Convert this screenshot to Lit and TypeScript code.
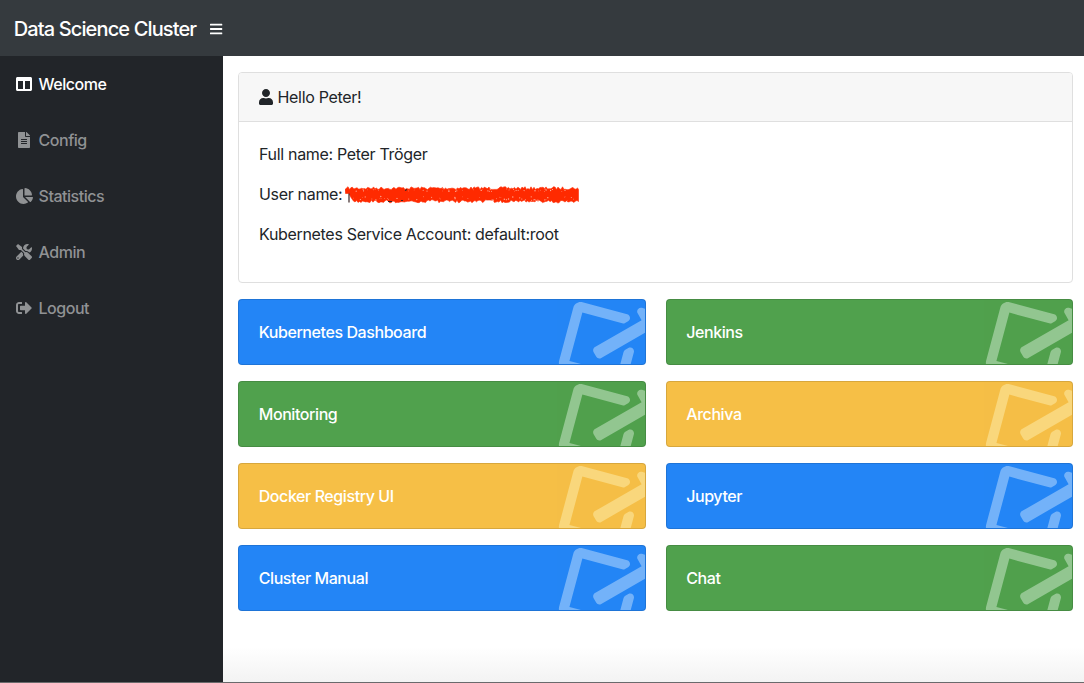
import { LitElement, html, svg, css } from "lit";
import { customElement, property } from "lit/decorators.js";

type Icon = { w: number; d: string };

const icons: Record<string, Icon> = {
  bars: { w: 448, d: "M16 132h416c8.800 0 16-7.200 16-16V76c0-8.800-7.200-16-16-16H16C7.200 60 0 67.200 0 76v40c0 8.800 7.200 16 16 16zm0 160h416c8.800 0 16-7.200 16-16v-40c0-8.800-7.200-16-16-16H16c-8.800 0-16 7.200-16 16v40c0 8.800 7.200 16 16 16zm0 160h416c8.800 0 16-7.200 16-16v-40c0-8.800-7.200-16-16-16H16c-8.800 0-16 7.200-16 16v40c0 8.800 7.200 16 16 16z" },
  columns: { w: 512, d: "M464 32H48C21.490 32 0 53.490 0 80v352c0 26.510 21.490 48 48 48h416c26.510 0 48-21.490 48-48V80c0-26.510-21.490-48-48-48zM224 416H64V160h160v256zm224 0H288V160h160v256z" },
  file: { w: 384, d: "M224 136V0H24C10.700 0 0 10.700 0 24v464c0 13.300 10.700 24 24 24h336c13.300 0 24-10.700 24-24V160H248c-13.200 0-24-10.800-24-24zm64 236c0 6.600-5.400 12-12 12H108c-6.600 0-12-5.400-12-12v-8c0-6.600 5.400-12 12-12h168c6.600 0 12 5.400 12 12v8zm0-64c0 6.600-5.400 12-12 12H108c-6.600 0-12-5.400-12-12v-8c0-6.600 5.400-12 12-12h168c6.600 0 12 5.400 12 12v8zm0-72v8c0 6.600-5.400 12-12 12H108c-6.600 0-12-5.400-12-12v-8c0-6.600 5.400-12 12-12h168c6.600 0 12 5.400 12 12zm96-114.100v6.100H256V0h6.100c6.400 0 12.500 2.500 17 7l97.900 98c4.500 4.500 7 10.600 7 16.900z" },
  pie: { w: 544, d: "M527.790 288H290.500l158.030 158.030c6.040 6.040 15.980 6.530 22.190.680 38.700-36.460 65.320-85.610 73.130-140.860 1.340-9.460-6.510-17.850-16.060-17.850zm-15.830-64.800C503.720 103.740 408.260 8.280 288.800.040 279.680-.590 272 7.100 272 16.240V240h223.770c9.140 0 16.820-7.680 16.190-16.800zM224 288V50.710c0-9.550-8.390-17.400-17.840-16.060C86.990 51.490-4.100 155.600.140 280.370 4.500 408.510 114.830 513.590 243.030 511.980c50.400-.630 96.970-16.870 135.260-44.030 7.900-5.600 8.420-17.230 1.570-24.080L224 288z" },
  tools: { w: 512, d: "M501.100 395.700L384 278.600c-23.100-23.100-57.600-27.600-85.400-13.900L192 158.100V96L64 0 0 64l96 128h62.100l106.600 106.600c-13.600 27.800-9.200 62.300 13.900 85.400l117.100 117.100c14.600 14.600 38.200 14.600 52.700 0l52.700-52.700c14.500-14.600 14.500-38.200 0-52.700zM331.700 225c28.300 0 54.900 11 74.900 31l19.400 19.400c15.800-6.900 30.800-16.500 43.800-29.500 37.100-37.100 49.700-89.300 37.900-136.700-2.200-9-13.500-12.100-20.100-5.500l-74.400 74.400-67.900-11.300L334 98.900l74.400-74.400c6.600-6.600 3.400-17.900-5.700-20.200-47.400-11.700-99.600.9-136.600 37.900-28.500 28.500-41.900 66.100-41.200 103.600l82.100 82.100c8.100-1.900 16.500-2.900 24.700-2.900zm-103.900 82l-56.700-56.700L18.700 402.800c-25 25-25 65.500 0 90.500s65.500 25 90.500 0l123.600-123.600c-7.600-19.900-9.900-41.600-5-62.700zM64 472c-13.200 0-24-10.800-24-24 0-13.300 10.700-24 24-24s24 10.700 24 24c0 13.200-10.700 24-24 24z" },
  logout: { w: 512, d: "M497 273L329 441c-15 15-41 4.500-41-17v-96H152c-13.300 0-24-10.700-24-24v-96c0-13.300 10.700-24 24-24h136V88c0-21.400 25.900-32 41-17l168 168c9.300 9.400 9.300 24.600 0 34zM192 436v-40c0-6.600-5.400-12-12-12H96c-17.700 0-32-14.300-32-32V160c0-17.700 14.300-32 32-32h84c6.600 0 12-5.400 12-12V76c0-6.600-5.400-12-12-12H96c-53 0-96 43-96 96v192c0 53 43 96 96 96h84c6.600 0 12-5.400 12-12z" },
  user: { w: 448, d: "M224 256c70.700 0 128-57.300 128-128S294.700 0 224 0 96 57.300 96 128s57.300 128 128 128zm89.600 32h-16.700c-22.200 10.200-46.900 16-72.900 16s-50.600-5.800-72.900-16h-16.700C60.200 288 0 348.200 0 422.400V464c0 26.500 21.500 48 48 48h352c26.500 0 48-21.500 48-48v-41.600c0-74.200-60.200-134.400-134.400-134.400z" },
  external: { w: 576, d: "M576 24v127.984c0 21.461-25.960 31.980-40.971 16.971l-35.707-35.709-243.523 243.523c-9.373 9.373-24.568 9.373-33.941 0l-22.627-22.627c-9.373-9.373-9.373-24.569 0-33.941L442.756 76.676l-35.703-35.705C391.982 25.900 402.656 0 424.024 0H552c13.255 0 24 10.745 24 24zM407.029 270.794l-16 16A23.999 23.999 0 0 0 384 303.765V448H64V128h264a24.003 24.003 0 0 0 16.970-7.029l16-16C376.089 89.851 365.381 64 344 64H48C21.490 64 0 85.490 0 112v352c0 26.510 21.490 48 48 48h352c26.510 0 48-21.490 48-48V287.764c0-21.382-25.852-32.090-40.971-16.970z" },
};

@customElement("fa-icon")
class FaIcon extends LitElement {
  @property() name = "";
  @property({ type: Number }) size = 16;
  static styles = css`
    :host { display: inline-flex; justify-content: center; align-items: center; flex: none; }
    svg { display: block; fill: currentColor; overflow: visible; }
  `;
  render() {
    const i = icons[this.name];
    return html`<svg width=${(i.w / 512) * this.size} height=${this.size} viewBox="0 0 ${i.w} 512"><path d=${i.d}></path></svg>`;
  }
}

@customElement("link-card")
class LinkCard extends LitElement {
  @property() label = "";
  @property({ reflect: true }) tone = "blue";
  static styles = css`
    :host {
      display: block; position: relative; overflow: hidden; box-sizing: border-box; height: 66px;
      border: 1px solid rgba(0, 0, 0, 0.125); border-radius: 4px; padding: 20px;
      color: #fff; line-height: 24px;
    }
    :host([tone="blue"]) { background-color: #2385f6; --glyph: #ebf5ff; }
    :host([tone="green"]) { background-color: #50a14d; --glyph: #f5fff5; }
    :host([tone="yellow"]) { background-color: #f6bf46; --glyph: #fffccd; }
    .bg {
      position: absolute; top: -19px; right: -16px; width: 100px; height: 120px;
      display: flex; align-items: center; justify-content: center;
      color: var(--glyph); opacity: 0.4; transform: rotate(15deg);
    }
    .label { position: relative; left: -0.3px; font-weight: 500; letter-spacing: -0.42px; }
  `;
  render() {
    return html`<div class="bg"><fa-icon name="external" size="80"></fa-icon></div><span class="label">${this.label}</span>`;
  }
}

/* Marker strokes that cover the account name. */
function scribble() {
  let seed = 7;
  const rnd = () => (seed = (seed * 16807) % 2147483647) / 2147483647;
  let edge = "M0 4";
  for (let x = 3; x < 233; x += 1.5) edge += ` L${x} ${(1.2 + rnd() * 3).toFixed(1)}`;
  edge += " L233.500 4 L233.500 16";
  for (let x = 232; x > 8; x -= 1.5) edge += ` L${x} ${(14.3 + rnd() * 3).toFixed(1)}`;
  edge += " L6 12 L4 8 L0.500 8 Z";
  const specks = [];
  for (let i = 0; i < 100; i++) {
    const x = 8 + rnd() * 222;
    const y = rnd() > 0.5 ? 3 + rnd() * 3 : 11 + rnd() * 4;
    specks.push(svg`<circle cx=${x.toFixed(1)} cy=${y.toFixed(1)} r=${(0.3 + rnd() * 0.4).toFixed(2)}></circle>`);
  }
  return html`<svg class="scribble" width="236" height="20" viewBox="0 -1.500 236 20">
    <path d=${edge} fill="#ff2a00" stroke="#ff2a00" stroke-width="0.6" stroke-linejoin="round"></path>
    <g fill="#ffb3a0">${specks}</g>
    <path d="M4 8v9M43 16h4M60 5l2-1M56 15h2" stroke="#3a2222" stroke-width="1.200" fill="none"></path>
  </svg>`;
}

const nav = [
  ["columns", "Welcome"],
  ["file", "Config"],
  ["pie", "Statistics"],
  ["tools", "Admin"],
  ["logout", "Logout"],
];

const cards = [
  ["Kubernetes Dashboard", "blue"],
  ["Jenkins", "green"],
  ["Monitoring", "green"],
  ["Archiva", "yellow"],
  ["Docker Registry UI", "yellow"],
  ["Jupyter", "blue"],
  ["Cluster Manual", "blue"],
  ["Chat", "green"],
];

@customElement("app-root")
class AppRoot extends LitElement {
  static styles = css`
    :host {
      display: flex; flex-direction: column; height: 683px; box-sizing: border-box; overflow: hidden;
      font-family: Inter, "Liberation Sans", sans-serif; font-size: 16px; line-height: 24px;
      letter-spacing: -0.32px; color: #212529; background: #fff;
      border-bottom: 1px solid #6a6a6c;
    }
    header {
      height: 56px; flex: none; background: #353a3e; color: #fff;
      display: flex; align-items: center; padding: 2px 0 0 13.7px; box-sizing: border-box;
    }
    .brand { font-size: 20px; font-weight: 500; letter-spacing: -0.87px; width: 196.3px; line-height: 30px; white-space: nowrap; }
    .main { flex: 1; display: flex; min-height: 0; }
    nav { width: 223px; flex: none; background: #222529; }
    .item {
      height: 56px; display: flex; align-items: center; gap: 4.5px; padding-left: 14px; box-sizing: border-box;
      color: #909294; font-weight: 500; letter-spacing: -0.46px;
    }
    .item fa-icon { width: 20px; }
    .item.active { color: #fff; }
    .content {
      flex: 1; padding: 16px 11px 0 15px;
      background: linear-gradient(#fff calc(100% - 35px), #f3f3f3);
    }
    .panel { border: 1px solid #dfdfdf; border-radius: 4px; height: 211px; box-sizing: border-box; background: #fff; overflow: hidden; }
    .head { height: 49px; box-sizing: border-box; border-bottom: 1px solid #dfdfdf; background: #f7f7f7; display: flex; align-items: center; gap: 4.5px; padding-left: 20px; }
    .body { padding: 20px; display: flex; flex-direction: column; gap: 16px; }
    .row { display: flex; align-items: center; height: 24px; }
    .scribble { margin-left: 2.5px; }
    .grid { display: grid; grid-template-columns: 407.5px 407.5px; column-gap: 20px; row-gap: 16px; margin-top: 16px; }
  `;
  render() {
    return html`
      <header><span class="brand">Data Science Cluster</span><fa-icon name="bars" size="14"></fa-icon></header>
      <div class="main">
        <nav>
          ${nav.map(([icon, label], i) => html`<div class="item ${i === 0 ? "active" : ""}"><fa-icon name=${icon}></fa-icon><span>${label}</span></div>`)}
        </nav>
        <div class="content">
          <section class="panel">
            <div class="head"><fa-icon name="user"></fa-icon><span>Hello Peter!</span></div>
            <div class="body">
              <div class="row">Full name: Peter Tröger</div>
              <div class="row">User name: ${scribble()}</div>
              <div class="row">Kubernetes Service Account: default:root</div>
            </div>
          </section>
          <div class="grid">
            ${cards.map(([label, tone]) => html`<link-card label=${label} tone=${tone}></link-card>`)}
          </div>
        </div>
      </div>
    `;
  }
}
